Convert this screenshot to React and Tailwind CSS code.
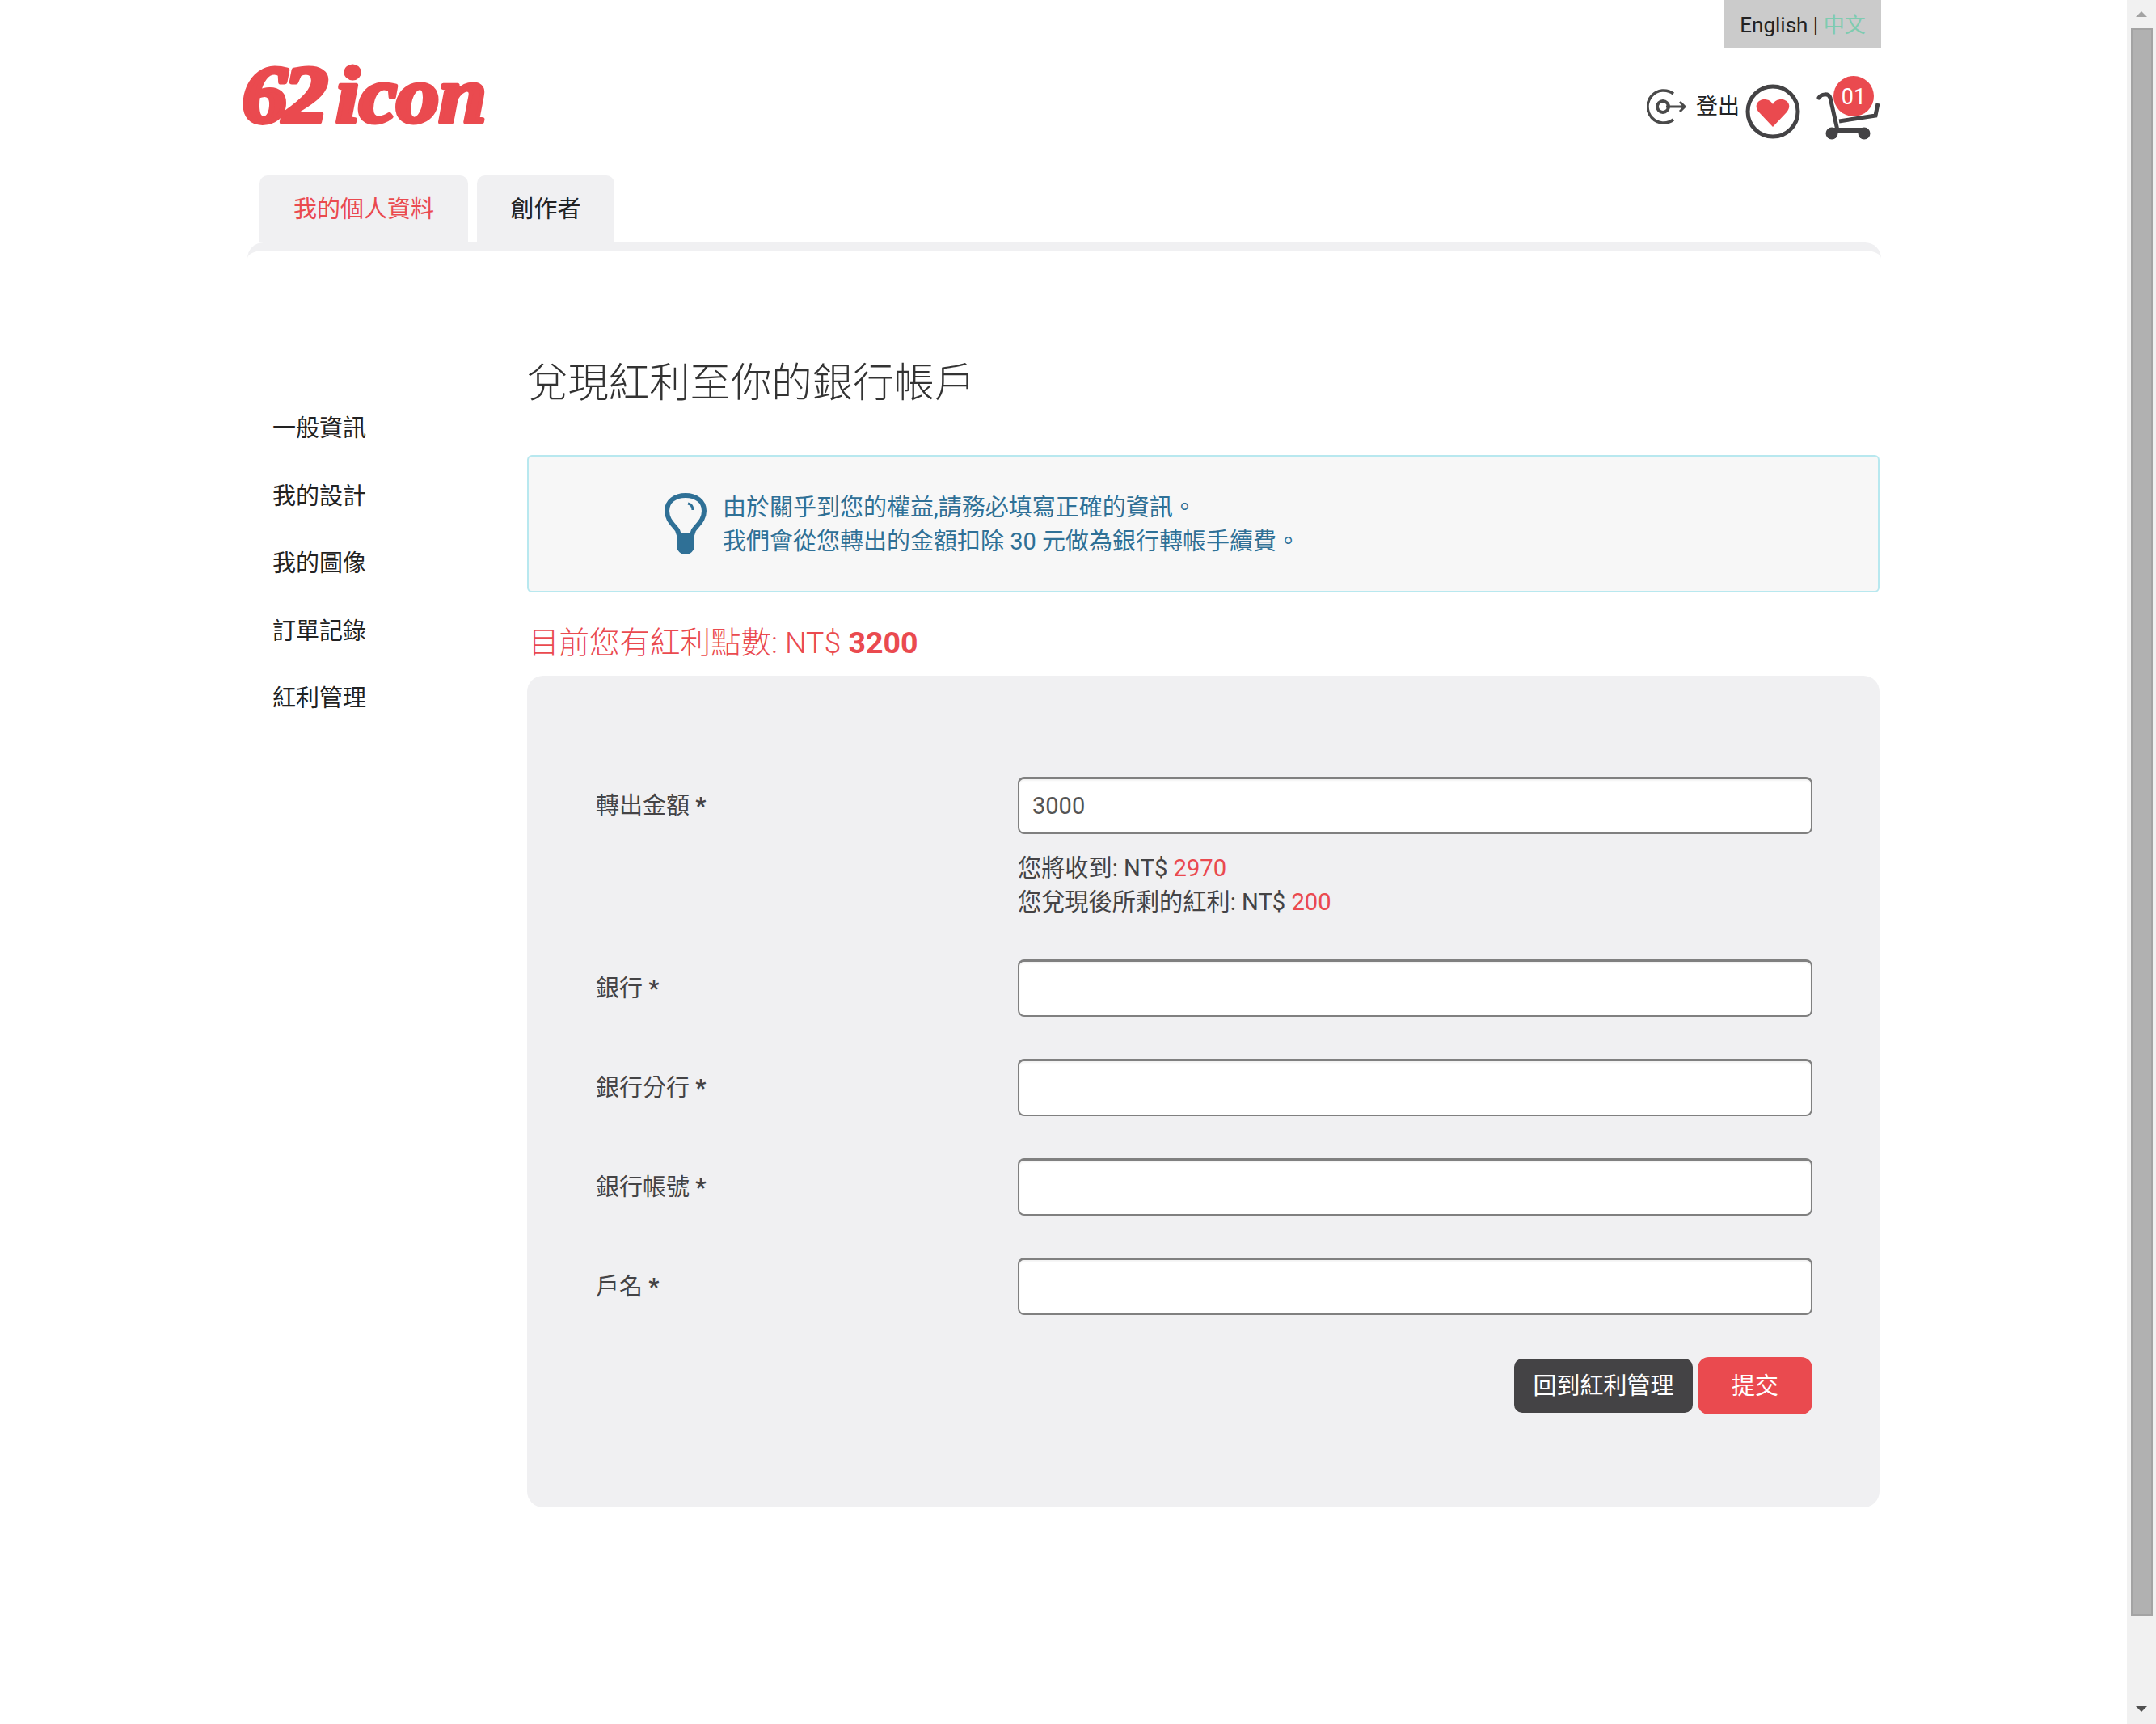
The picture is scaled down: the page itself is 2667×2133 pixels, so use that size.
// Bonus cash-out page: header, tabs, sidebar and the transfer form.
const red = "text-[#ea4a4f]";

function Logo() {
  return (
    <svg width="320" height="125" viewBox="0 0 320 125" className="block overflow-visible">
      <g fill="#ea4a4f" stroke="#ea4a4f" strokeLinejoin="round" fontFamily="'Liberation Serif', serif" fontWeight="700" fontStyle="italic">
        <text transform="translate(2 90) scale(1.1 1)" fontSize="100" strokeWidth="6" letterSpacing="-4">62</text>
        <text transform="translate(117 91) scale(1.07 1)" fontSize="100" strokeWidth="5" letterSpacing="-1">icon</text>
      </g>
    </svg>
  );
}

function LogoutIcon() {
  return (
    <svg width="50" height="44" viewBox="0 0 50 44" fill="none" stroke="#4a4a4a" strokeWidth="3.5">
      <path d="M33 6A20 20 0 1 0 33 38" />
      <circle cx="20" cy="22" r="7" strokeWidth="4" />
      <path d="M24 22H47M41 16l6 6-6 6" strokeWidth="3" />
    </svg>
  );
}

function HeartIcon() {
  return (
    <svg width="68" height="68" viewBox="0 0 68 68">
      <circle cx="34" cy="34" r="31" fill="none" stroke="#444345" strokeWidth="5" />
      <path d="M34 53L17 35C10 27 15 19 24 19c4 0 8 2 10 6 2-4 6-6 10-6 9 0 14 8 7 16Z" fill="#ea4a4f" />
    </svg>
  );
}

function CartIcon() {
  return (
    <div className="relative h-[60px] w-[80px]">
      <svg width="80" height="60" viewBox="0 0 80 60" className="absolute left-0 top-0" fill="none" stroke="#444345" strokeWidth="5">
        <path d="M3 8c3-5 12-6 14 0l9 40" strokeLinecap="round" />
        <path d="M28 37L73 30 76 15" />
        <path d="M20 48H60" strokeWidth="6" />
        <circle cx="19" cy="52" r="7.5" fill="#444345" stroke="none" />
        <circle cx="59" cy="52" r="7.5" fill="#444345" stroke="none" />
      </svg>
      <span className="absolute left-[21px] top-[-19px] flex h-[50px] w-[50px] items-center justify-center rounded-full bg-[#ea4a4f] pt-[2px] text-[27px] text-white">
        01
      </span>
    </div>
  );
}

function BulbIcon() {
  return (
    <svg width="52" height="76" viewBox="0 0 52 76" fill="none" className="shrink-0">
      <path d="M16 46C10 38 3 33 3 22 3 10 13 3 26 3s23 7 23 19c0 11-7 16-13 24l-2 6H18Z" stroke="#2f7096" strokeWidth="6" />
      <path d="M29 13c4 1 6 4 6 8" stroke="#2f7096" strokeWidth="3" />
      <path d="M15 52h22v14c0 5-5 10-11 10s-11-5-11-10Z" fill="#2f7096" />
    </svg>
  );
}

function Field({ label, value = "", children }) {
  return (
    <div className="flex">
      <label className="h-[71px] w-[522px] shrink-0 text-[29px] leading-[73px] text-[#444345]">
        {label} <b className="font-bold">*</b>
      </label>
      <div className="flex-1">
        <input
          readOnly
          value={value}
          className="block h-[71px] w-[983px] rounded-[8px] border-2 border-t-[3px] border-[#808080] bg-white px-[16px] text-[29px] text-[#555] shadow-[inset_0_2px_2px_rgba(0,0,0,0.05)]"
        />
        {children}
      </div>
    </div>
  );
}

const sideLinks = ["一般資訊", "我的設計", "我的圖像", "訂單記錄", "紅利管理"];

export default function App() {
  return (
    <div className="flex h-[2133px] overflow-hidden bg-white font-[Roboto,'Noto_Sans_CJK_TC',sans-serif] text-[#333]">
      <main className="min-w-0 flex-1 pl-[298px]">
        <div className="w-[2029px]">
          <div className="flex justify-end">
            <div className="flex h-[60px] w-[194px] items-center justify-center bg-[#cbcbcb] pt-[2px] text-[26px] text-[#222]">
              English&nbsp;|&nbsp;<span className="text-[#7fcbb0]">中文</span>
            </div>
          </div>

          <header className="flex h-[157px] items-start justify-between">
            <Logo />
            <div className="mt-[44px] flex items-start">
              <div className="mt-[6px]"><LogoutIcon /></div>
              <span className="ml-[11px] mt-[6px] text-[27px] leading-[44px] text-[#222]">登出</span>
              <div className="ml-[7px]"><HeartIcon /></div>
              <div className="ml-[20px] mt-[9px]"><CartIcon /></div>
            </div>
          </header>

          <nav className="flex gap-[11px] pl-[23px]">
            <div className={`flex h-[83px] w-[258px] items-center justify-center rounded-t-[10px] bg-[#f0f0f2] pt-[3px] text-[29px] ${red}`}>
              我的個人資料
            </div>
            <div className="flex h-[83px] w-[170px] items-center justify-center rounded-t-[10px] bg-[#f0f0f2] pt-[3px] text-[29px] text-[#222]">
              創作者
            </div>
          </nav>
          <div className="ml-[8px] h-[20px] rounded-t-[20px] border-t-[10px] border-[#f0f0f2]" />

          <div className="flex">
            <aside className="w-[354px] shrink-0 pl-[39px] pt-[189px]">
              <ul className="flex flex-col gap-[41.5px]">
                {sideLinks.map((item) => (
                  <li key={item} className="text-[29px] leading-[42px] text-[#222]">{item}</li>
                ))}
              </ul>
            </aside>

            <section className="w-[1673px] pt-[118px]">
              <h1 className="text-[50.4px] font-light leading-[72px] text-[#333]">兌現紅利至你的銀行帳戶</h1>

              <div className="mt-[53px] flex h-[170px] items-center rounded-[6px] border-2 border-[#b8e8ef] bg-[#f7f7f7] pl-[168px]">
                <BulbIcon />
                <p className="ml-[20px] pt-[2px] text-[29px] leading-[42px] text-[#2f7096]">
                  由於關乎到您的權益,請務必填寫正確的資訊。<br />
                  我們會從您轉出的金額扣除 30 元做為銀行轉帳手續費。
                </p>
              </div>

              <p className={`mt-[38px] pl-[2px] text-[37.5px] font-light leading-[48px] ${red}`}>
                目前您有紅利點數: NT$ <b className="font-bold">3200</b>
              </p>

              <div className="mt-[17px] h-[1029px] rounded-[20px] bg-[#f0f0f2] pl-[85px] pt-[125px]">
                <div className="flex flex-col gap-[52px]">
                  <Field label="轉出金額" value="3000">
                    <div className="mb-[-2px] mt-[21px] text-[29.2px] leading-[42px] text-[#444345]">
                      <div>您將收到: NT$ <span className={red}>2970</span></div>
                      <div>您兌現後所剩的紅利: NT$ <span className={red}>200</span></div>
                    </div>
                  </Field>
                  <Field label="銀行" />
                  <Field label="銀行分行" />
                  <Field label="銀行帳號" />
                  <Field label="戶名" />
                </div>
                <div className="mt-[52px] flex w-[1505px] items-center justify-end gap-[6px]">
                  <button className="h-[67px] w-[221px] rounded-[10px] bg-[#444345] pt-[2px] text-[29px] text-white">回到紅利管理</button>
                  <button className="h-[71px] w-[142px] rounded-[14px] bg-[#ea4a4f] pt-[2px] text-[29px] text-white">提交</button>
                </div>
              </div>
            </section>
          </div>
        </div>
      </main>

      {/* Window scrollbar */}
      <div className="flex h-full w-[36px] shrink-0 flex-col items-center bg-[#f1f1f1]">
        <div className="flex h-[35px] items-center justify-center">
          <div className="h-0 w-0 border-x-[7px] border-b-[7px] border-x-transparent border-b-[#a3a3a3]" />
        </div>
        <div className="h-[1964px] w-[27px] border-2 border-[#a3a3a3] bg-[#b1b1b1]" />
        <div className="flex flex-1 flex-col items-center justify-end pb-[15px]">
          <div className="h-0 w-0 border-x-[7px] border-t-[7px] border-x-transparent border-t-[#505050]" />
        </div>
      </div>
    </div>
  );
}
